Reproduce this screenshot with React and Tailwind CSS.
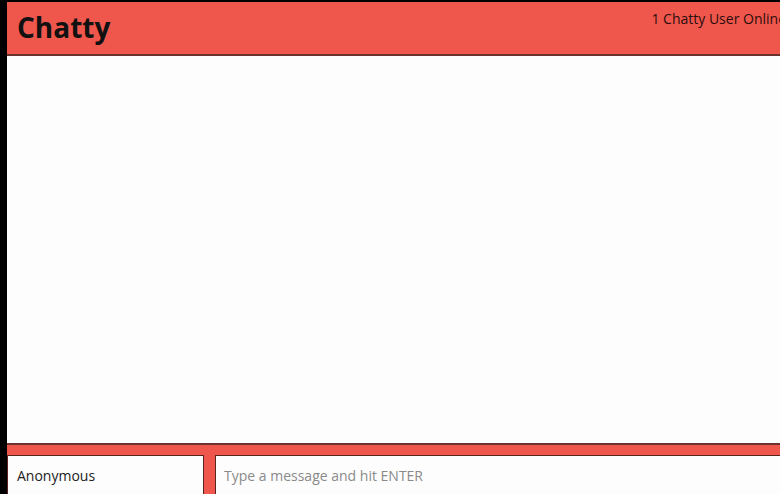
import React from 'react';

const App = () => {
  return (
    <div className="h-[494px] w-[780px] overflow-hidden bg-black pt-[2px] pl-[7px] font-['Open_Sans',sans-serif]">
      <div className="flex h-full flex-col bg-[#fdfdfd]">
        <nav className="flex h-[54px] shrink-0 items-start justify-between overflow-hidden whitespace-nowrap border-b-2 border-[#6b3330] bg-[#ef574c] pl-[10px]">
          <h1 className="mt-[5px] text-[28px] font-bold leading-[40px] text-[#111]">Chatty</h1>
          <span className="mt-[7px] -mr-[6px] text-[14px] leading-[20px] text-[#2a0d0c]">1 Chatty User Online</span>
        </nav>
        <main className="flex-1" />
        <footer className="-mr-[12px] flex h-[51px] shrink-0 gap-[11px] border-t-2 border-[#6b3330] bg-[#ef574c] pt-[10px]">
          <input
            defaultValue="Anonymous"
            className="h-[60px] w-[197px] shrink-0 border border-[#5a2320] bg-[#fdfdfd] px-[9px] pb-[20px] text-[14px] text-[#222] outline-none"
          />
          <input
            placeholder="Type a message and hit ENTER"
            className="h-[60px] min-w-0 flex-1 border border-[#5a2320] bg-[#fdfdfd] px-[8px] pb-[20px] text-[14px] text-[#222] outline-none placeholder:text-[#8a8a8a]"
          />
        </footer>
      </div>
    </div>
  );
};

export default App;
